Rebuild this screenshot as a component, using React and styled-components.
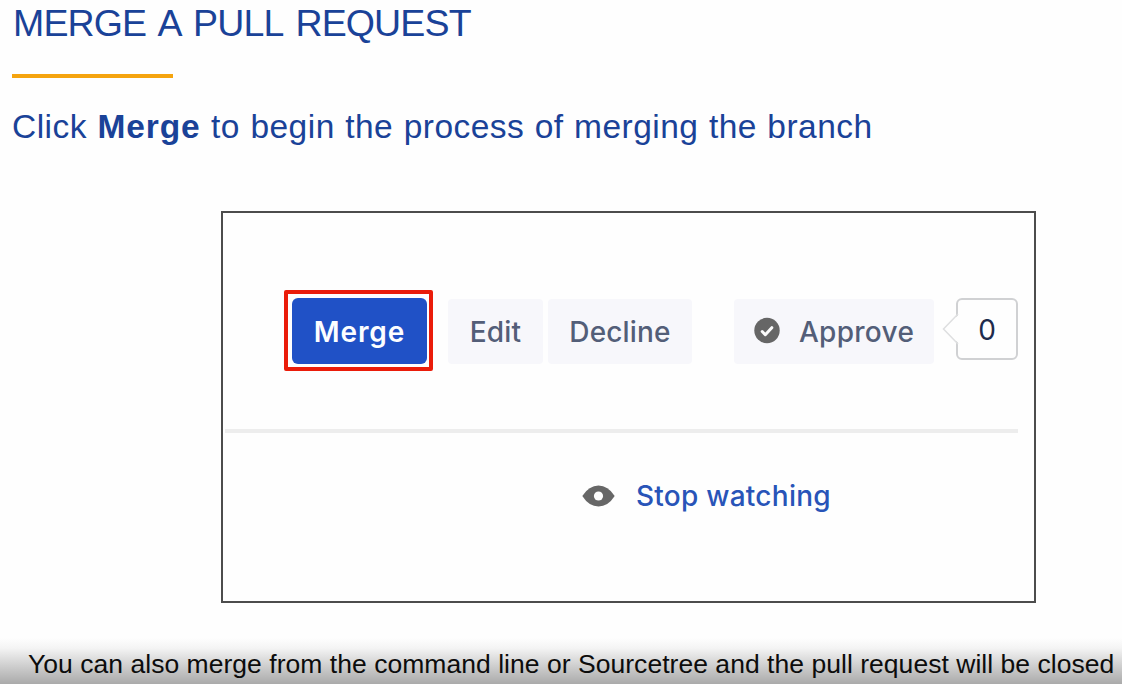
import React from "react";
import styled, { createGlobalStyle } from "styled-components";

const GlobalStyle = createGlobalStyle`
  *, *::before, *::after { box-sizing: border-box; }
  body { margin: 0; background: #fefefe; }
`;

const Slide = styled.main`
  width: 1122px;
  height: 684px;
  display: flex;
  flex-direction: column;
  overflow: hidden;
  background: #fefefe;
  color: #1a4298;
  font-family: "Liberation Sans", Arial, sans-serif;
  white-space: nowrap;
`;

const Title = styled.h1`
  margin: 0;
  padding: 1px 0 0 13px;
  font-size: 37.5px;
  font-weight: 400;
  line-height: 44px;
  letter-spacing: -0.85px;
  word-spacing: 3.8px;
`;

const Accent = styled.div`
  width: 161px;
  height: 4px;
  margin: 29px 0 0 12px;
  background: #f5a40e;
`;

const Lead = styled.p`
  margin: 29px 0 0 12px;
  font-size: 33.5px;
  line-height: 40px;
  letter-spacing: 0.47px;
  word-spacing: 0.7px;

  b { letter-spacing: 0.9px; }
`;

const Panel = styled.section`
  width: 815px;
  height: 392px;
  margin: 64px 0 0 221px;
  padding-top: 77px;
  border: 2px solid #4c4c4c;
  font-family: Inter, sans-serif;
  background: #fefefe;
`;

const Toolbar = styled.div`
  display: flex;
  align-items: flex-start;
  height: 139px;
  margin-right: 16px;
  padding-left: 61px;
`;

const Highlight = styled.div`
  width: 149px;
  height: 81px;
  padding: 4px;
  border: 4px solid #ea1c0a;
  border-radius: 2px;
`;

const Button = styled.button`
  display: flex;
  align-items: center;
  justify-content: center;
  gap: ${(p) => p.$gap || 0}px;
  width: ${(p) => p.$width}px;
  height: ${(p) => (p.$primary ? 66 : 65)}px;
  margin: ${(p) => (p.$primary ? "0" : "9px 0 0")} ${(p) => p.$left || 0}px;
  margin-right: 0;
  padding: ${(p) => (p.$primary ? 2 : 1)}px 0 0;
  border: 0;
  border-radius: ${(p) => (p.$primary ? 6 : 4)}px;
  background: ${(p) => (p.$primary ? "#2051c6" : "#f7f7fb")};
  color: ${(p) => (p.$primary ? "#fcfdff" : "#535e78")};
  font: ${(p) => (p.$primary ? 600 : 500)} 28px/34px Inter, sans-serif;
  letter-spacing: ${(p) => p.$track || 0}px;
`;

const Bubble = styled.div`
  position: relative;
  display: flex;
  align-items: center;
  justify-content: center;
  width: 62px;
  height: 62px;
  margin: 8px 0 0 22px;
  padding-top: 1px;
  border: 2px solid #d0d1d3;
  border-radius: 6px;
  color: #202b4c;
  font-size: 28px;
`;

const Tail = styled.svg`
  position: absolute;
  left: -16px;
  top: 12px;
`;

const Divider = styled.div`
  width: 793px;
  height: 4px;
  margin-left: 2px;
  background: #ededed;
`;

const Watch = styled.div`
  display: flex;
  align-items: center;
  gap: 21px;
  margin: 44px 0 0 359px;
  color: #2854b8;
  font-size: 28px;
  font-weight: 500;
  line-height: 38px;
  letter-spacing: 0.25px;
`;

const Caption = styled.footer`
  flex: 1;
  margin-top: 35px;
  padding: 9px 0 0 28px;
  background: linear-gradient(#fefefe 0%, #f4f4f4 22%, #cfcfcf 60%, #aaaaaa 100%);
  color: #0c0c0c;
  font-size: 26.5px;
  line-height: 34px;
  letter-spacing: 0.035px;
`;

const CheckIcon = () => (
  <svg width="26" height="30" viewBox="0 -0.5 26 30">
    <circle cx="13" cy="13" r="12.7" fill="#666" />
    <path d="M8.2 14l3.1 3.2 6.5-7" fill="none" stroke="#fafafa" strokeWidth="3" strokeLinecap="round" strokeLinejoin="round" />
  </svg>
);

const EyeIcon = () => (
  <svg width="33" height="22" viewBox="0 0 33 22">
    <path d="M0.3 11Q7 0.5 16.5 0.5T32.7 11Q26 21.5 16.5 21.5T0.3 11Z" fill="#676767" />
    <circle cx="16.5" cy="11" r="4.6" fill="#fefefe" />
  </svg>
);

export default function App() {
  return (
    <>
      <GlobalStyle />
      <Slide>
        <Title>MERGE A PULL REQUEST</Title>
        <Accent />
        <Lead>
          Click <b>Merge</b> to begin the process of merging the branch
        </Lead>
        <Panel>
          <Toolbar>
            <Highlight>
              <Button $primary $width={135} $track={0.9}>Merge</Button>
            </Highlight>
            <Button $width={95} $left={15} $track={0.2}>Edit</Button>
            <Button $width={144} $left={5} $track={0.15}>Decline</Button>
            <Button $width={200} $left={42} $gap={19} $track={0.3}>
              <CheckIcon />
              Approve
            </Button>
            <Bubble>
              <Tail width="18" height="34" viewBox="0 0 18 34">
                <path d="M18 1.5L1.5 17L18 32.5Z" fill="#fefefe" />
                <path d="M16 2L1.5 17L16 32" fill="none" stroke="#dedfe0" strokeWidth="1.5" />
              </Tail>
              0
            </Bubble>
          </Toolbar>
          <Divider />
          <Watch>
            <EyeIcon />
            Stop watching
          </Watch>
        </Panel>
        <Caption>You can also merge from the command line or Sourcetree and the pull request will be closed</Caption>
      </Slide>
    </>
  );
}
